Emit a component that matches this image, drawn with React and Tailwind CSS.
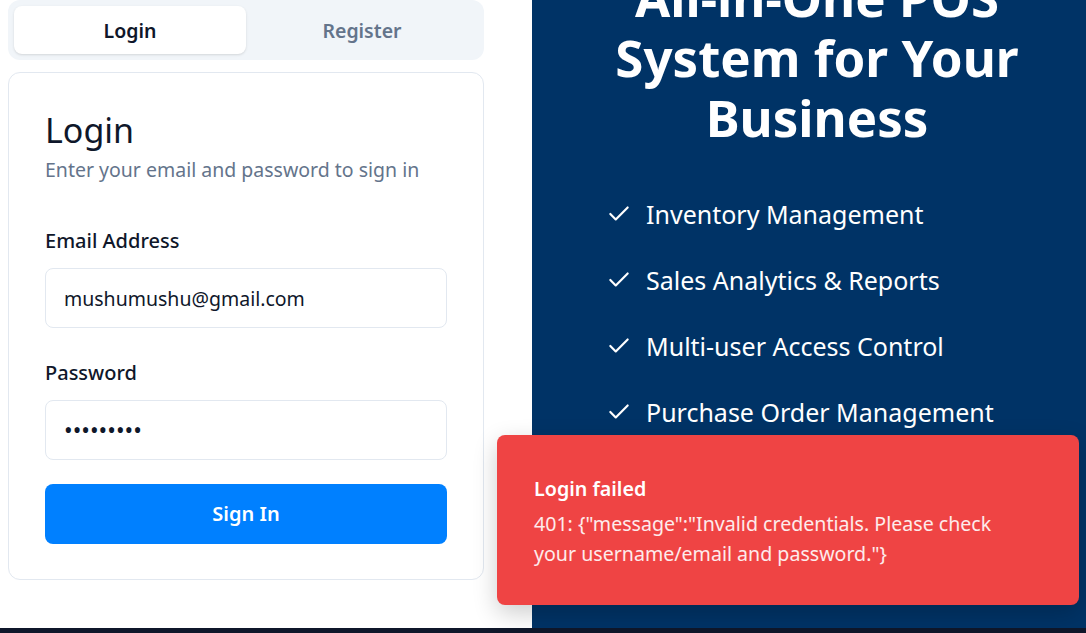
import React, { useState } from 'react';
import { Check } from 'lucide-react';

const FEATURES = [
    'Inventory Management',
    'Sales Analytics & Reports',
    'Multi-user Access Control',
    'Purchase Order Management',
];

const App = () => {
    const [tab, setTab] = useState('login');
    const [email, setEmail] = useState('mushumushu@gmail.com');
    const [password, setPassword] = useState('123456789');

    return (
        <div className="relative min-h-screen bg-white font-['Noto_Sans',sans-serif] overflow-hidden">
            <div className="flex h-[628px] overflow-hidden">

                {/* Left: auth form */}
                <div className="w-[532px] shrink-0 px-2">
                    <div className="w-[476px]">
                        <div className="grid grid-cols-2 h-[60px] p-[6px] rounded-xl bg-[#f1f5f9]">
                            <button
                                onClick={() => setTab('login')}
                                className={`rounded-lg text-[19.5px] font-semibold pt-[2px] ${tab === 'login' ? 'bg-white text-[#0f172a] shadow-sm' : 'text-[#64748b]'}`}
                            >
                                Login
                            </button>
                            <button
                                onClick={() => setTab('register')}
                                className={`rounded-lg text-[19.5px] font-semibold pt-[2px] ${tab === 'register' ? 'bg-white text-[#0f172a] shadow-sm' : 'text-[#64748b]'}`}
                            >
                                Register
                            </button>
                        </div>

                        <div className="mt-3 h-[508px] rounded-xl border border-[#e2e8f0] bg-white px-[36px] pt-[33px]">
                            <h1 className="text-[34px] leading-[48px] font-normal text-[#0f172a]">Login</h1>
                            <p className="mt-[2px] text-[19.5px] leading-[28px] text-[#64748b]">Enter your email and password to sign in</p>

                            <label className="block mt-[43px] text-[20px] leading-[28px] font-medium text-[#0f172a]">Email Address</label>
                            <input
                                value={email}
                                onChange={(e) => setEmail(e.target.value)}
                                className="mt-[13px] block w-full h-[60px] rounded-lg border border-[#e2e8f0] px-[18px] text-[19.5px] text-[#0f172a] outline-none"
                            />

                            <label className="block mt-[31px] text-[20px] leading-[28px] font-medium text-[#0f172a]">Password</label>
                            <input
                                type="password"
                                value={password}
                                onChange={(e) => setPassword(e.target.value)}
                                className="mt-[13px] block w-full h-[60px] rounded-lg border border-[#e2e8f0] px-[18px] text-[23px] text-[#0f172a] outline-none"
                            />

                            <button className="mt-6 w-full h-[60px] rounded-lg bg-[#0080ff] text-white text-[20px] font-semibold">
                                Sign In
                            </button>
                        </div>
                    </div>
                </div>

                {/* Right: marketing panel */}
                <div className="flex-1 bg-[#003366] pl-[78px] pr-[62px]">
                    <h2 className="-mt-[33px] text-center text-[51px] leading-[60px] font-bold text-white">
                        All-in-One POS<br />System for Your<br />Business
                    </h2>
                    <ul className="mt-[51px] flex flex-col gap-[34px]">
                        {FEATURES.map((f) => (
                            <li key={f} className="flex items-center gap-[14px] text-[25px] leading-[32px] text-white">
                                <Check size={26} strokeWidth={2} className="-ml-1 shrink-0" />
                                {f}
                            </li>
                        ))}
                    </ul>
                </div>
            </div>

            <div className="h-[5px] bg-[#0f172a]" />

            {/* Error toast */}
            <div className="absolute right-[7px] bottom-[28px] w-[582px] h-[170px] rounded-lg bg-[#ef4444] px-[37px] pt-[40px] shadow-[0_8px_24px_rgba(0,0,0,0.2)]">
                <div className="text-[19.7px] leading-[28px] font-semibold text-white">Login failed</div>
                <div className="mt-[6px] w-[470px] text-[19.6px] leading-[30px] text-white/90">
                    401: {'{"message":"Invalid credentials. Please check your username/email and password."}'}
                </div>
            </div>
        </div>
    );
};

export default App;
